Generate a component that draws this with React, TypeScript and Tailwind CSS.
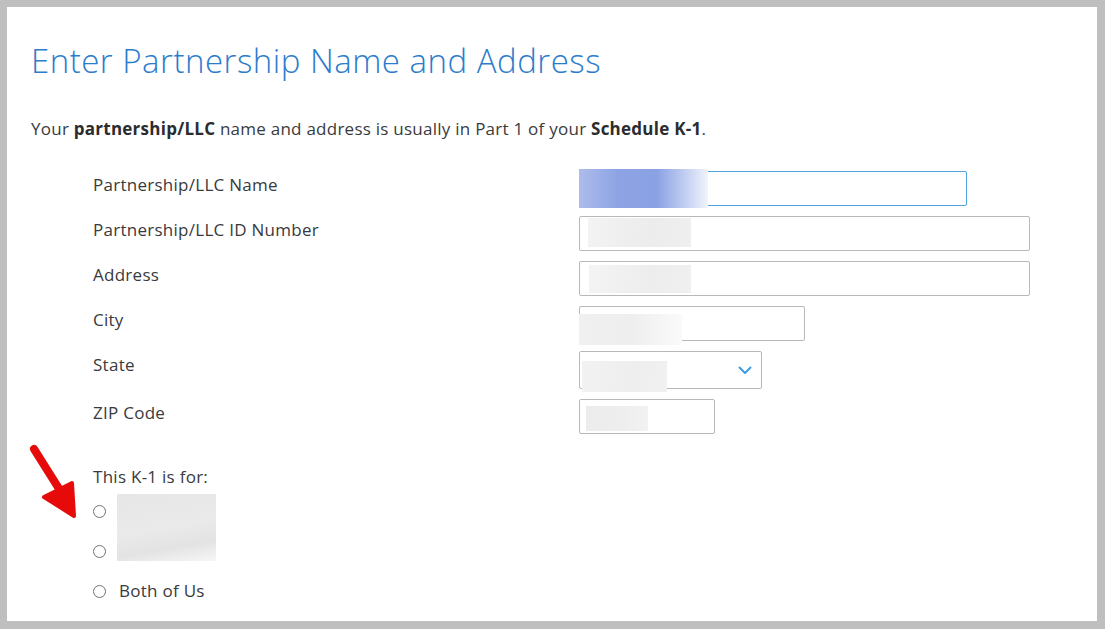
import React from "react";

const font = { fontFamily: "'Open Sans', Lato, 'Liberation Sans', sans-serif" };

function Smudge({ className }: { className: string }) {
  return <div className={`pointer-events-none absolute ${className}`} />;
}

function Field({
  label,
  width,
  height = "h-[35px]",
  smudge,
  focused = false,
  select = false,
}: {
  label: string;
  width: string;
  height?: string;
  smudge: string;
  focused?: boolean;
  select?: boolean;
}) {
  return (
    <div className="flex items-start">
      <div className="w-[486px] shrink-0 pt-[2px] text-[17px] leading-6 tracking-[0.27px] text-[#393a3d]">{label}</div>
      <div
        className={`relative ${width} ${height} rounded-[2px] border bg-white ${
          focused ? "border-[#4da3dd]" : "border-[#b8b8b8]"
        }`}
      >
        <Smudge className={smudge} />
        {select && (
          <svg className="absolute right-[9px] top-[14px]" width="14" height="9" viewBox="0 0 14 9" fill="none">
            <polyline points="1.5,1.5 7,7 12.5,1.5" stroke="#3c9ce6" strokeWidth="2" strokeLinecap="round" strokeLinejoin="round" />
          </svg>
        )}
      </div>
    </div>
  );
}

function Radio({ children }: { children?: React.ReactNode }) {
  return (
    <div className="flex h-10 items-center">
      <span className="h-[13px] w-[13px] rounded-full border border-[#6f6f6f] bg-white" />
      {children}
    </div>
  );
}

export default function App() {
  return (
    <div className="min-h-[629px] w-[1105px] bg-[#bfbfbf] pb-[8px] pl-[7px] pr-[8px] pt-[7px]" style={font}>
      <div className="relative h-[614px] bg-white pl-[24px]">
        <h1 className="pt-[30px] text-[33px] font-light leading-[48px] tracking-[0.5px] text-[#2c7ccc]">
          Enter Partnership Name and Address
        </h1>

        <p className="mt-[32px] text-[17px] leading-6 tracking-[0.25px] text-[#393a3d]">
          Your <b className="font-bold text-[#2b2c2e]">partnership/LLC</b> name and address is usually in Part 1 of your{" "}
          <b className="font-bold text-[#2b2c2e]">Schedule K-1</b>.
        </p>

        <div className="mt-[30px] flex flex-col gap-[10px] pl-[62px]">
          <Field
            label="Partnership/LLC Name"
            width="w-[388px]"
            focused
            smudge="-left-[1px] -top-[3px] h-[39px] w-[129px] bg-[linear-gradient(90deg,#aebcec_0%,#8da3e4_30%,#8aa1e3_60%,#c9d4f3_85%,#f1f4fb_100%)]"
          />
          <Field
            label="Partnership/LLC ID Number"
            width="w-[451px]"
            smudge="left-[8px] top-[1px] h-[29px] w-[103px] bg-[linear-gradient(100deg,#f3f3f3,#ececec_60%,#efefef)]"
          />
          <Field
            label="Address"
            width="w-[451px]"
            smudge="left-[9px] top-[3px] h-[28px] w-[102px] bg-[linear-gradient(100deg,#f4f4f4,#ededed_60%,#f0f0f0)]"
          />
          <Field
            label="City"
            width="w-[226px]"
            smudge="-left-[1px] top-[7px] h-[31px] w-[103px] bg-[linear-gradient(90deg,#f0f0f0,#eeeeee_50%,#fafafa)]"
          />
          <Field
            label="State"
            width="w-[183px]"
            height="h-[38px]"
            select
            smudge="left-[2px] top-[9px] h-[31px] w-[85px] bg-[linear-gradient(100deg,#f2f2f2,#eeeeee_60%,#f1f1f1)]"
          />
          <Field
            label="ZIP Code"
            width="w-[136px]"
            smudge="left-[6px] top-[6px] h-[25px] w-[62px] bg-[linear-gradient(90deg,#ececec,#eeeeee_60%,#f2f2f2)]"
          />
        </div>

        <div className="mt-[31px] pl-[62px] text-[17px] tracking-[0.27px] text-[#393a3d]">
          <div className="leading-6">This K-1 is for:</div>
          <div className="relative mt-[2px]">
            <Smudge className="left-[24px] top-[3px] h-[67px] w-[99px] bg-[linear-gradient(170deg,#e6e6e6,#eaeaea_50%,#e3e3e3_75%,#f6f6f6)]" />
            <Radio />
            <Radio />
            <Radio>
              <span className="ml-[13px] leading-6">Both of Us</span>
            </Radio>
          </div>
        </div>

        <svg className="absolute left-[18px] top-[434px]" width="70" height="90" viewBox="0 0 70 90" fill="none">
          <line x1="9" y1="8" x2="43" y2="62" stroke="#e60a0a" strokeWidth="8" strokeLinecap="round" />
          <polygon points="19,56 49,75 47,42" fill="#e60a0a" stroke="#e60a0a" strokeWidth="4" strokeLinejoin="round" />
        </svg>
      </div>
    </div>
  );
}
